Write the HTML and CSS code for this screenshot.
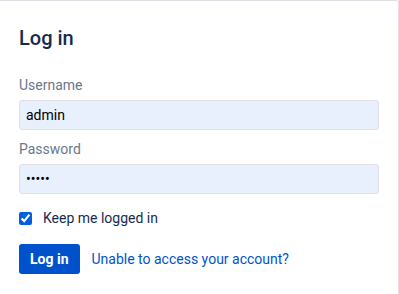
FILE: index.html
```html
<!DOCTYPE html>
<html lang="en">

<head>
    <meta charset="UTF-8">
    <meta name="viewport" content="width=device-width, initial-scale=1.0">
    <title>Log in</title>
    <link rel="stylesheet" href="styles.css">
</head>

<body>
    <div class="login-card">
        <h1 class="title">Log in</h1>

        <form class="login-form" onsubmit="return false;">
            <div class="field">
                <label for="username">Username</label>
                <input type="text" id="username" class="input-field" value="admin">
            </div>

            <div class="field">
                <label for="password">Password</label>
                <input type="password" id="password" class="input-field" value="admin">
            </div>

            <div class="remember">
                <input type="checkbox" id="remember" checked>
                <label for="remember">Keep me logged in</label>
            </div>

            <div class="actions">
                <button type="submit" class="login-btn">Log in</button>
                <a href="#" class="forgot-link">Unable to access your account?</a>
            </div>
        </form>
    </div>
</body>

</html>
```

FILE: styles.css
```css
* {
    margin: 0;
    padding: 0;
    box-sizing: border-box;
}

body {
    font-family: 'Segoe UI', Roboto, sans-serif;
    font-size: 14px;
    color: #172b4d;
    background: #fff;
}

.login-card {
    width: 399px;
    min-height: 294px;
    border-top: 1px solid #dfe1e6;
    border-right: 1px solid #dfe1e6;
    border-top-right-radius: 3px;
    padding: 23px 19px 20px;
}

.title {
    font-size: 20px;
    font-weight: 500;
    line-height: 28px;
    color: #172b4d;
    margin-bottom: 23px;
}

.field {
    margin-bottom: 9px;
}

.field label {
    display: block;
    color: #6b778c;
    line-height: 20px;
    margin-bottom: 5px;
}

.input-field {
    display: block;
    width: 360px;
    height: 30px;
    padding: 0 6px;
    border: 1px solid #dfe1e6;
    border-radius: 3px;
    background: #e8f0fe;
    font-family: inherit;
    font-size: 14px;
    color: #000;
}

.input-field:focus {
    outline: none;
    border-color: #4c9aff;
}

.remember {
    display: flex;
    align-items: center;
    margin-top: 14px;
    height: 20px;
}

.remember input {
    width: 13px;
    height: 13px;
    margin: 0 11px 0 0;
    accent-color: #0060df;
}

.remember label {
    color: #172b4d;
}

.actions {
    display: flex;
    align-items: center;
    margin-top: 16px;
}

.login-btn {
    height: 30px;
    padding: 0 11px;
    background: #0052cc;
    color: #fff;
    border: none;
    border-radius: 3px;
    font-family: inherit;
    font-size: 14px;
    font-weight: 700;
    cursor: pointer;
}

.login-btn:hover {
    background: #0065ff;
}

.forgot-link {
    margin-left: 12px;
    color: #0052cc;
    text-decoration: none;
}

.forgot-link:hover {
    text-decoration: underline;
}
```
